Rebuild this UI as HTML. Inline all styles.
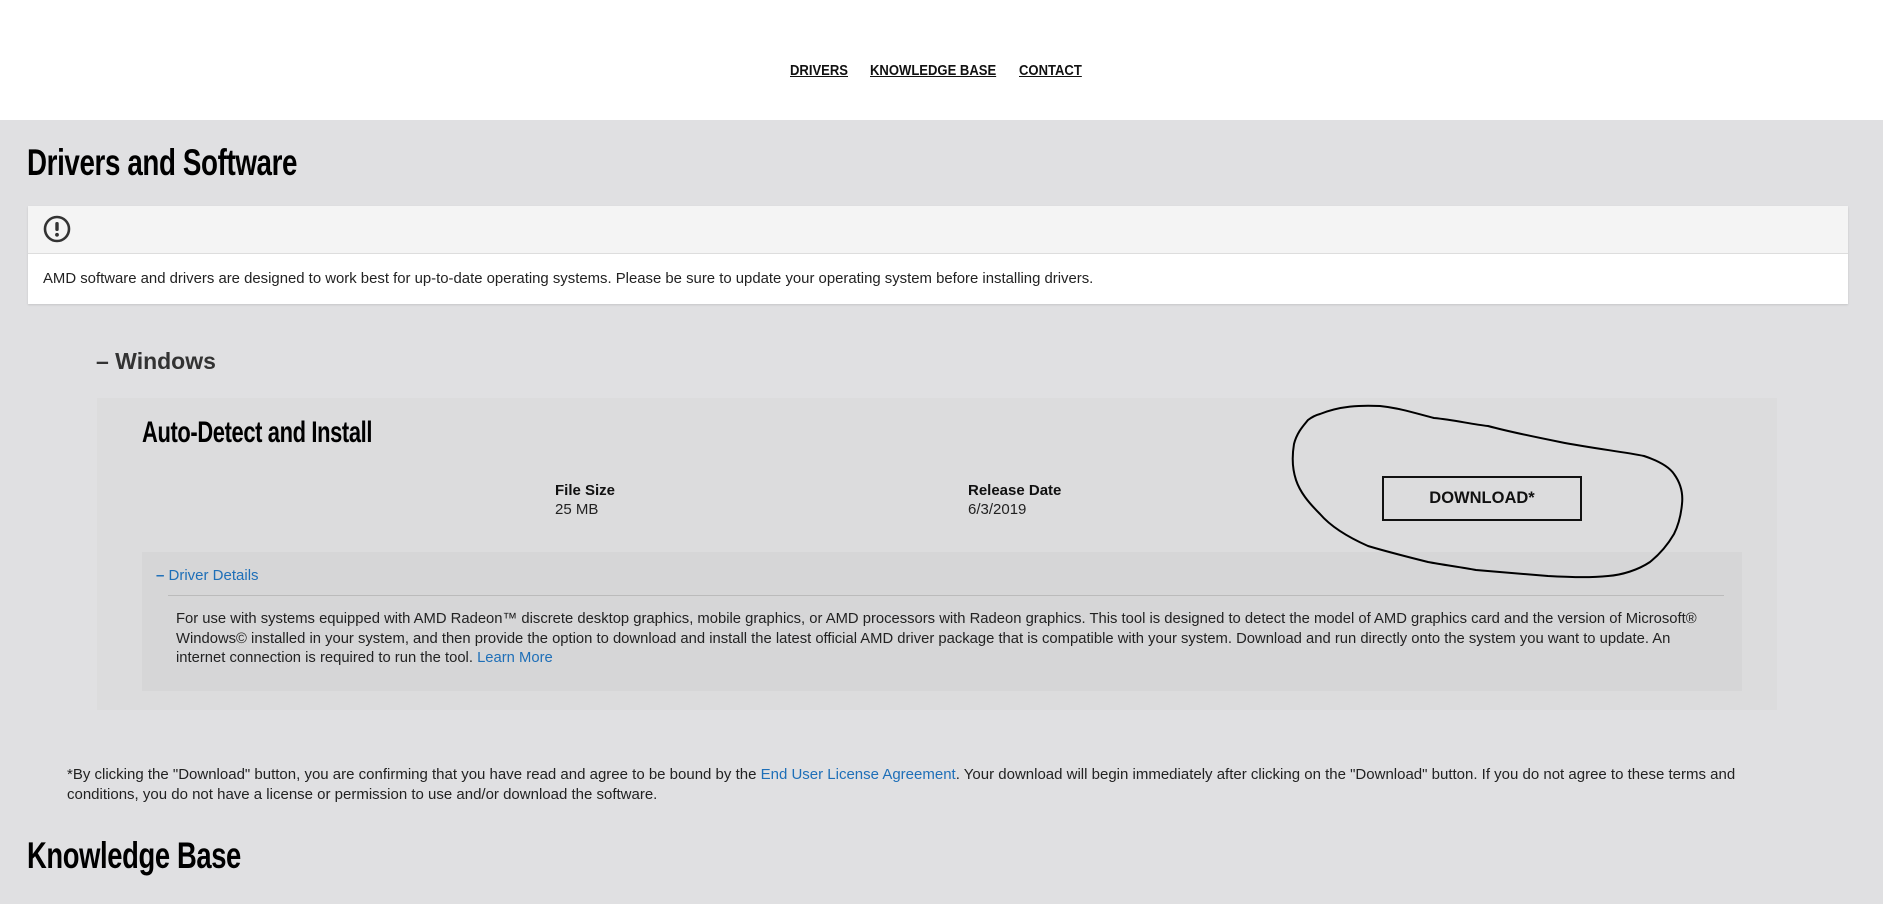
<!DOCTYPE html>
<html><head><meta charset="utf-8">
<style>
*{margin:0;padding:0;box-sizing:border-box}
body{width:1883px;height:904px;overflow:hidden;background:#e0e0e2;font-family:"Liberation Sans",sans-serif;color:#111;position:relative}
.abs{position:absolute;white-space:nowrap}
.hdr{position:absolute;left:0;top:0;width:1883px;height:120px;background:#fff}
.nav{font-size:14.5px;font-weight:bold;text-decoration:underline;color:#111;top:63px;transform:scaleX(.9);transform-origin:left}
.h1{font-weight:bold;font-size:37px;letter-spacing:-0.5px;color:#000;transform:scaleX(.75);transform-origin:left}
.t{font-size:15px;color:#222}
a{color:#1e6fb8;text-decoration:none}
</style></head><body>
<div class="hdr"></div>
<div class="abs nav" style="left:790px">DRIVERS</div>
<div class="abs nav" style="left:870px">KNOWLEDGE BASE</div>
<div class="abs nav" style="left:1019px">CONTACT</div>

<div class="abs h1" style="left:27px;top:142px">Drivers and Software</div>

<div class="abs" style="left:28px;top:206px;width:1820px;height:98px;background:#fff;box-shadow:0 1px 2px rgba(0,0,0,.12)"></div>
<div class="abs" style="left:28px;top:206px;width:1820px;height:48px;background:#f4f4f4;border-bottom:1px solid #ddd"></div>
<svg class="abs" style="left:42px;top:215px" width="30" height="30" viewBox="0 0 30 30"><circle cx="15" cy="14" r="12" fill="none" stroke="#333" stroke-width="2.6"/><rect x="13.3" y="7" width="3.4" height="9" rx="1.5" fill="#333"/><circle cx="15" cy="19.8" r="1.9" fill="#333"/></svg>
<div class="abs t" style="left:43px;top:271px;font-size:14.9px">AMD software and drivers are designed to work best for up-to-date operating systems. Please be sure to update your operating system before installing drivers.</div>

<div class="abs" style="left:96px;top:348px;font-size:23px;font-weight:bold;color:#333">– Windows</div>

<div class="abs" style="left:97px;top:398px;width:1680px;height:312px;background:#dcdcdd"></div>
<div class="abs h1" style="left:142px;top:416px;font-size:30px;transform:scaleX(.73)">Auto-Detect and Install</div>
<div class="abs t" style="left:555px;top:482px;font-weight:bold;color:#111">File Size</div>
<div class="abs t" style="left:555px;top:501px">25 MB</div>
<div class="abs t" style="left:968px;top:482px;font-weight:bold;color:#111">Release Date</div>
<div class="abs t" style="left:968px;top:501px">6/3/2019</div>
<div class="abs" style="left:1382px;top:476px;width:200px;height:45px;border:2px solid #111;text-align:center;line-height:41px;font-size:16.5px;font-weight:bold">DOWNLOAD*</div>

<div class="abs" style="left:142px;top:552px;width:1600px;height:139px;background:#d6d6d7"></div>
<div class="abs" style="left:156px;top:567px;font-size:15px;color:#1e6fb8"><b>–</b>&nbsp;Driver Details</div>
<div class="abs" style="left:168px;top:595px;width:1556px;height:1px;background:#bbb"></div>
<div class="abs t" style="left:176px;top:610px;line-height:19.5px;font-size:14.8px">For use with systems equipped with AMD Radeon™ discrete desktop graphics, mobile graphics, or AMD processors with Radeon graphics. This tool is designed to detect the model of AMD graphics card and the version of Microsoft®<br>Windows© installed in your system, and then provide the option to download and install the latest official AMD driver package that is compatible with your system. Download and run directly onto the system you want to update. An<br>internet connection is required to run the tool. <a>Learn More</a></div>

<svg class="abs" style="left:0;top:0" width="1883" height="904"><path d="M1320,414 C1340,406 1360,405 1380,406 C1400,408 1418,414 1434,418 C1455,420 1470,424 1488,426 C1510,432 1535,437 1560,442 C1590,448 1625,452 1644,456 C1662,462 1670,468 1674,474 C1682,485 1683,495 1682,504 C1681,515 1678,526 1674,534 C1667,546 1660,554 1650,562 C1638,570 1622,575 1608,576 C1588,578 1568,577 1548,576 C1524,574 1500,572 1476,570 C1460,567 1444,565 1428,562 C1408,557 1388,552 1368,546 C1350,538 1332,528 1320,514 C1308,502 1300,492 1296,480 C1292,468 1292,456 1294,444 C1297,432 1304,425 1308,420 C1312,417 1316,415 1320,414 Z" fill="none" stroke="#000" stroke-width="2"/></svg>

<div class="abs t" style="left:67px;top:765px;line-height:19.5px">*By clicking the "Download" button, you are confirming that you have read and agree to be bound by the <a>End User License Agreement</a>. Your download will begin immediately after clicking on the "Download" button. If you do not agree to these terms and<br>conditions, you do not have a license or permission to use and/or download the software.</div>

<div class="abs h1" style="left:27px;top:835px;transform:scaleX(.74)">Knowledge Base</div>
</body></html>
